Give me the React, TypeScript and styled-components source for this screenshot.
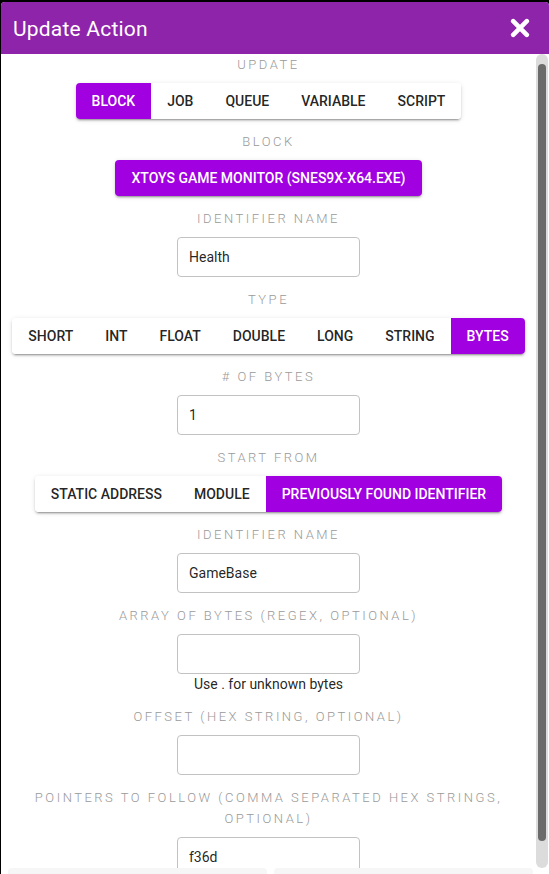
import React from "react";
import styled, { createGlobalStyle } from "styled-components";

const GlobalStyle = createGlobalStyle`
  html, body { margin: 0; padding: 0; background: #000; }
  body { font-family: Roboto, "Noto Sans", Arial, sans-serif; }
  * { box-sizing: border-box; }
`;

const ACCENT = "#a100e0";

const Dialog = styled.div`
  margin: 2px 0 0 1px;
  height: 872px;
  display: flex;
  flex-direction: column;
  background: #fff;
  border-radius: 4px 4px 0 0;
  overflow: hidden;
`;

const Header = styled.div`
  flex: 0 0 52px;
  display: flex;
  align-items: center;
  justify-content: space-between;
  padding: 0 19px 0 12px;
  background: #8e24aa;
  color: #fff;
`;

const Title = styled.div`
  font-size: 21px;
  font-weight: 400;
  letter-spacing: 0.2px;
  padding-top: 1px;
`;

const CloseButton = styled.button`
  border: 0;
  background: transparent;
  padding: 0;
  width: 20px;
  height: 20px;
  display: flex;
  color: #fff;
  cursor: pointer;
`;

const Body = styled.div`
  flex: 1;
  min-height: 0;
  display: flex;
`;

const Content = styled.div`
  flex: 1;
  overflow: hidden;
  display: flex;
  flex-direction: column;
  align-items: center;
`;

const ScrollTrack = styled.div`
  width: 12px;
  margin-right: 1px;
  background: #dcdcdc;
  border-radius: 6px;
  display: flex;
  padding: 10px 2px 27px;
`;

const ScrollThumb = styled.div`
  flex: 1;
  background: #6b6b6b;
  border-radius: 4px;
`;

const Footer = styled.div`
  flex: 0 0 6px;
  display: flex;
  gap: 7px;
  padding: 0 16px 0 7px;
`;

const FooterButton = styled.div`
  flex: 1;
  background: #f6f6f6;
  border-radius: 4px 4px 0 0;
`;

const Field = styled.div`
  display: flex;
  flex-direction: column;
  align-items: center;
  margin-bottom: 12px;
  width: 100%;
`;

const Label = styled.div`
  font-size: 13px;
  font-weight: 300;
  line-height: 21px;
  letter-spacing: 2.5px;
  color: #9a9a9a;
  text-transform: uppercase;
  text-align: center;
  padding: 0 16px;
  margin-bottom: 8px;
`;

const ToggleGroup = styled.div`
  display: inline-flex;
  background: #fff;
  border-radius: 4px;
  overflow: hidden;
  box-shadow: 0 3px 1px -2px rgba(0, 0, 0, 0.2), 0 2px 2px 0 rgba(0, 0, 0, 0.14),
    0 1px 5px 0 rgba(0, 0, 0, 0.12);
`;

const ToggleButton = styled.button<{ $active?: boolean }>`
  height: 36px;
  padding: 0 16px;
  border: 0;
  margin: 0;
  font-family: Roboto, Arial, sans-serif;
  font-size: 14px;
  font-weight: 500;
  text-transform: uppercase;
  letter-spacing: 0;
  white-space: nowrap;
  background: ${(p) => (p.$active ? ACCENT : "#fff")};
  color: ${(p) => (p.$active ? "#fff" : "rgba(0,0,0,0.87)")};
  cursor: pointer;
`;

const PrimaryButton = styled.button`
  height: 36px;
  padding: 0 16px;
  border: 0;
  border-radius: 4px;
  font-family: Roboto, Arial, sans-serif;
  font-size: 14px;
  font-weight: 500;
  text-transform: uppercase;
  background: ${ACCENT};
  color: #fff;
  box-shadow: 0 3px 1px -2px rgba(0, 0, 0, 0.2), 0 2px 2px 0 rgba(0, 0, 0, 0.14),
    0 1px 5px 0 rgba(0, 0, 0, 0.12);
`;

const TextInput = styled.input`
  width: 183px;
  height: 40px;
  padding: 0 11px;
  border: 1px solid #c2c2c2;
  border-radius: 4px;
  font-family: Roboto, Arial, sans-serif;
  font-size: 14px;
  color: rgba(0, 0, 0, 0.87);
  background: #fff;
  outline: none;
`;

const Helper = styled.div`
  font-size: 14px;
  line-height: 20px;
  color: rgba(0, 0, 0, 0.87);
  text-align: center;
`;

const CloseIcon = () => (
  <svg width="20" height="20" viewBox="0 0 20 20">
    <path
      d="M3.2 3.2 L16.8 16.8 M16.8 3.2 L3.2 16.8"
      stroke="currentColor"
      strokeWidth="4.6"
      strokeLinecap="round"
      fill="none"
    />
  </svg>
);

type ToggleProps = { options: string[]; active: string };
const Toggle = ({ options, active }: ToggleProps) => (
  <ToggleGroup>
    {options.map((o) => (
      <ToggleButton key={o} $active={o === active}>
        {o}
      </ToggleButton>
    ))}
  </ToggleGroup>
);

export default function App() {
  return (
    <>
      <GlobalStyle />
      <Dialog>
        <Header>
          <Title>Update Action</Title>
          <CloseButton aria-label="close">
            <CloseIcon />
          </CloseButton>
        </Header>
        <Body>
          <Content>
            <Field>
              <Label>Update</Label>
              <Toggle
                options={["Block", "Job", "Queue", "Variable", "Script"]}
                active="Block"
              />
            </Field>
            <Field>
              <Label>Block</Label>
              <PrimaryButton>xToys Game Monitor (snes9x-x64.exe)</PrimaryButton>
            </Field>
            <Field>
              <Label>Identifier Name</Label>
              <TextInput defaultValue="Health" />
            </Field>
            <Field>
              <Label>Type</Label>
              <Toggle
                options={["Short", "Int", "Float", "Double", "Long", "String", "Bytes"]}
                active="Bytes"
              />
            </Field>
            <Field>
              <Label># of Bytes</Label>
              <TextInput defaultValue="1" />
            </Field>
            <Field>
              <Label>Start From</Label>
              <Toggle
                options={["Static Address", "Module", "Previously Found Identifier"]}
                active="Previously Found Identifier"
              />
            </Field>
            <Field>
              <Label>Identifier Name</Label>
              <TextInput defaultValue="GameBase" />
            </Field>
            <Field>
              <Label>Array of Bytes (regex, optional)</Label>
              <TextInput defaultValue="" />
              <Helper>Use . for unknown bytes</Helper>
            </Field>
            <Field>
              <Label>Offset (hex string, optional)</Label>
              <TextInput defaultValue="" />
            </Field>
            <Field>
              <Label>Pointers to follow (comma separated hex strings, optional)</Label>
              <TextInput defaultValue="f36d" />
            </Field>
          </Content>
          <ScrollTrack>
            <ScrollThumb />
          </ScrollTrack>
        </Body>
        <Footer>
          <FooterButton />
          <FooterButton />
        </Footer>
      </Dialog>
    </>
  );
}
